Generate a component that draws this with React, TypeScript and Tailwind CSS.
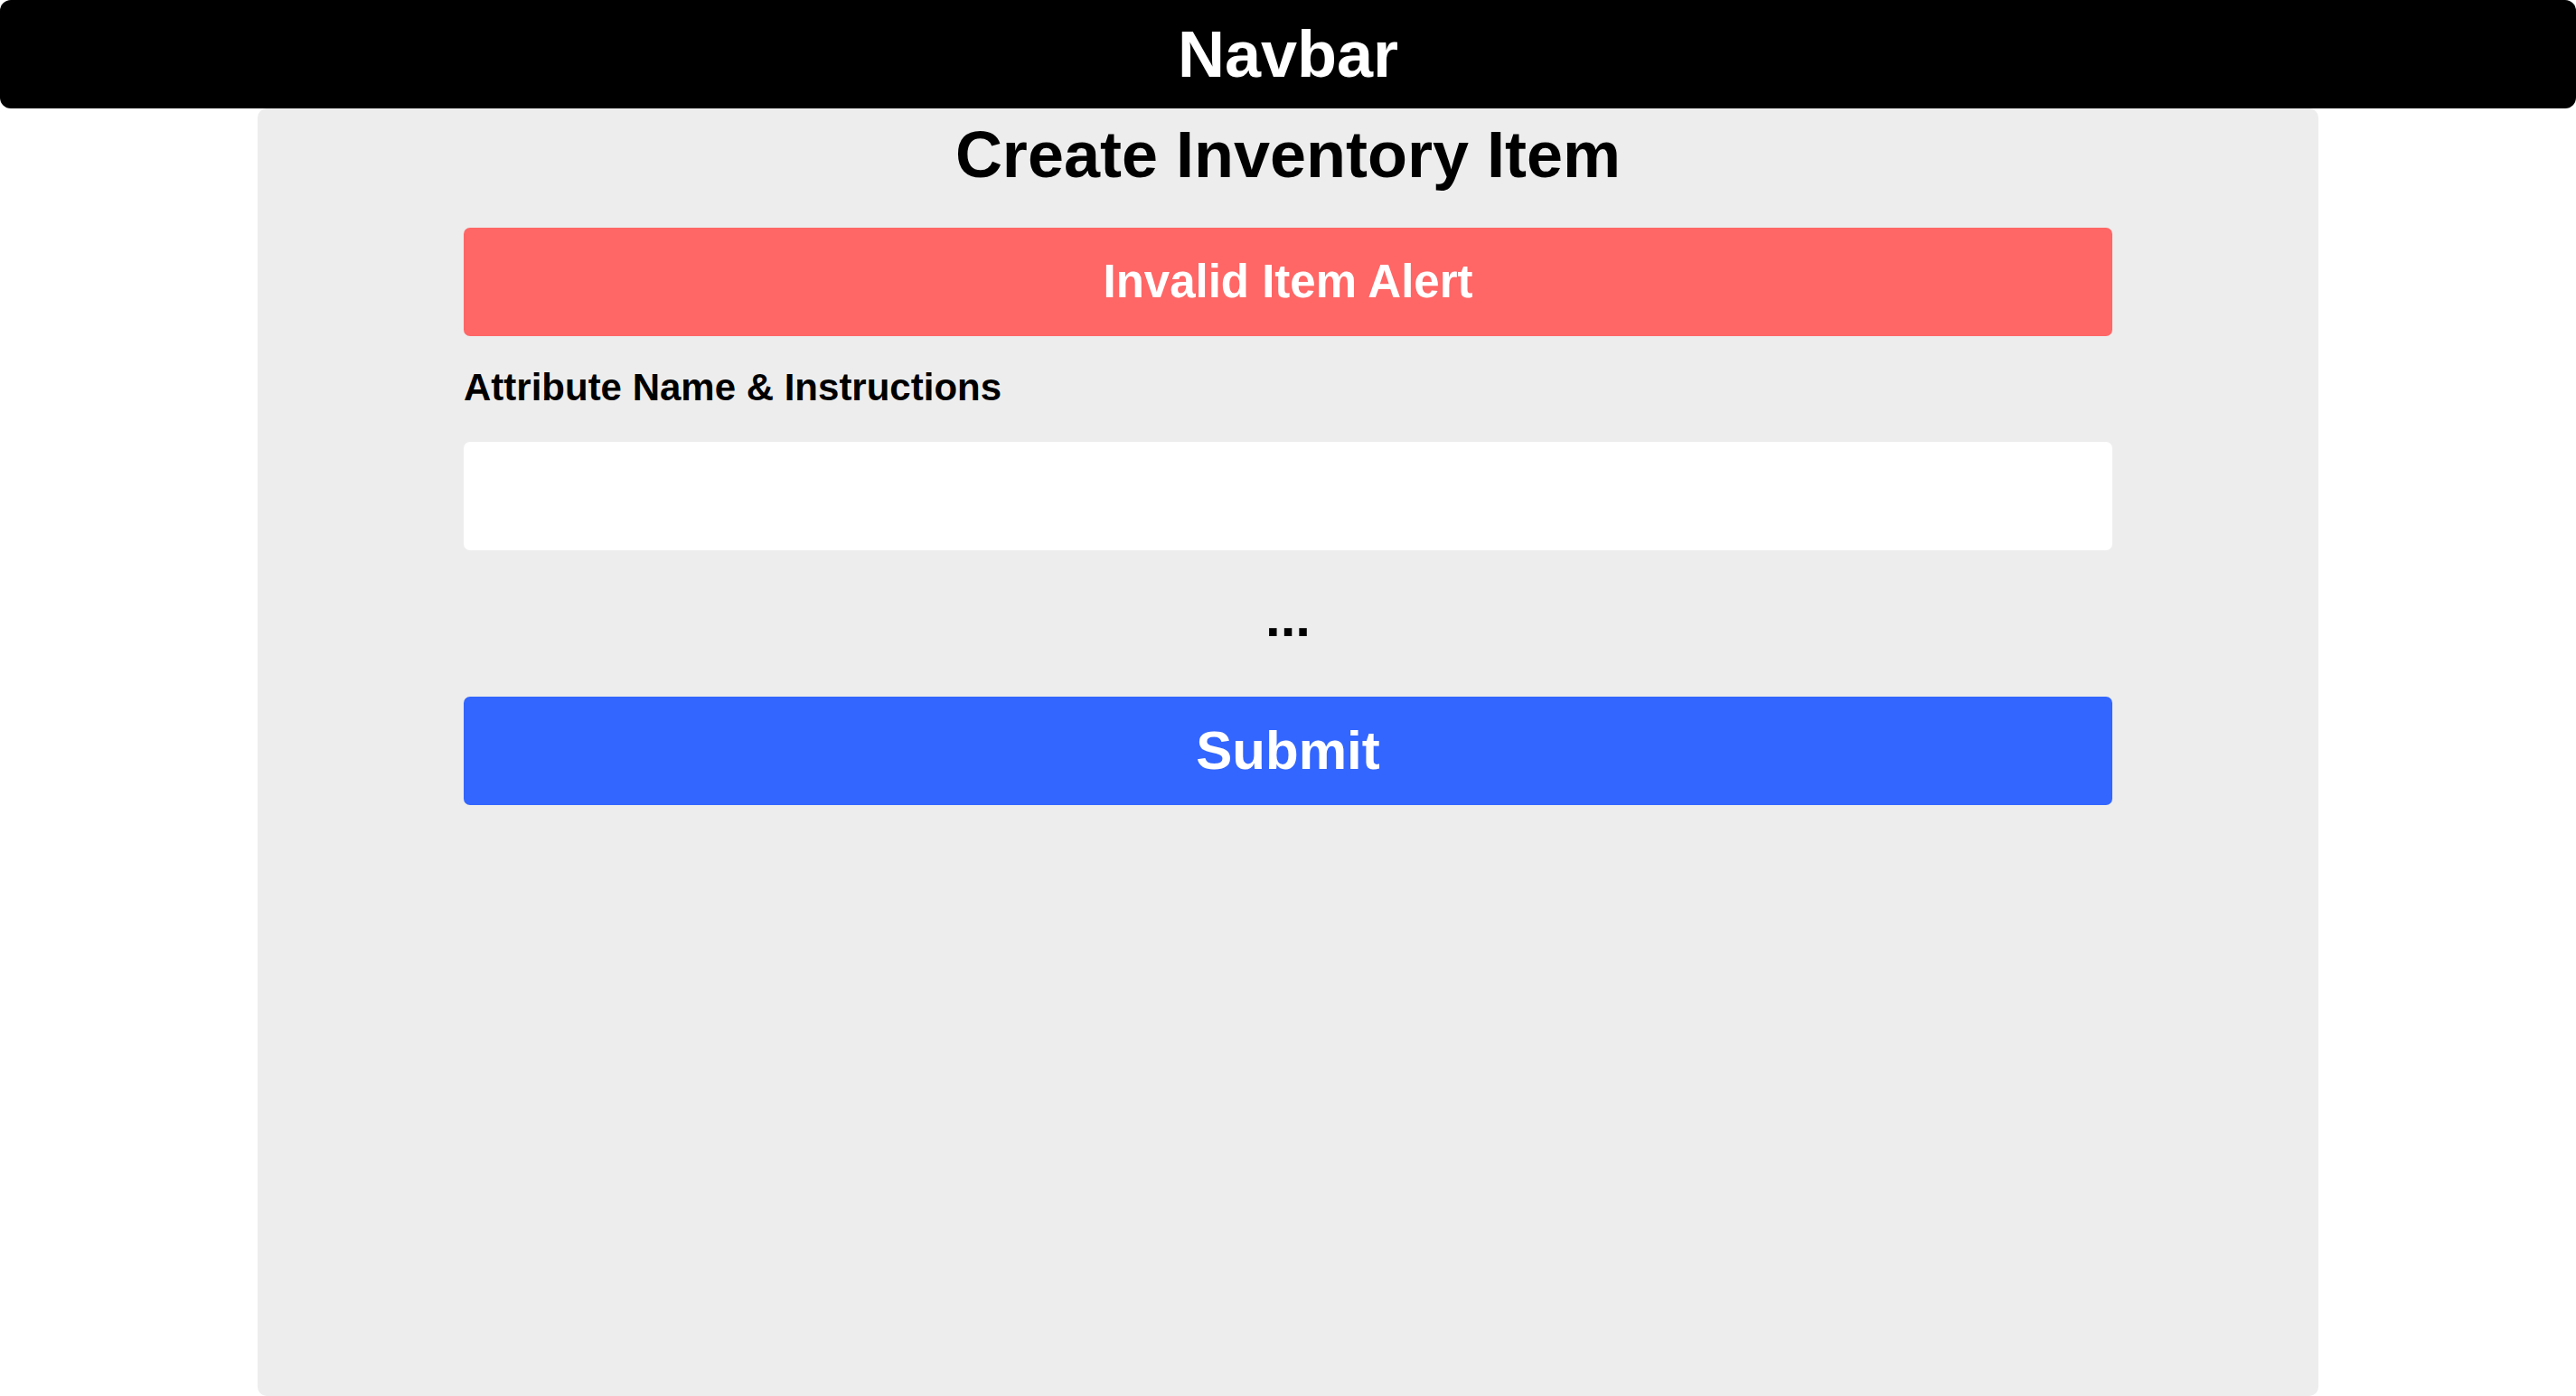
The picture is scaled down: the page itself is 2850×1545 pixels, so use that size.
import React from "react";

export default function App() {
  return (
    <div
      className="min-h-screen w-full bg-white flex flex-col"
      style={{ fontFamily: '"Liberation Sans", Arial, sans-serif' }}
    >
      <nav className="h-[120px] w-full bg-black rounded-[12px] flex items-center justify-center">
        <span className="text-white font-bold text-[72px] leading-[82px]">Navbar</span>
      </nav>
      <main className="mx-[285px] h-[1425px] bg-[#ededed] rounded-[10px] pt-[10px] flex flex-col items-center">
        <h1 className="text-black font-bold text-[72px] leading-[82px]">Create Inventory Item</h1>
        <div className="w-[1824px] mt-[40px] flex flex-col">
          <div className="h-[120px] bg-[#ff6666] rounded-[7px] flex items-center justify-center">
            <span className="text-white font-bold text-[51px] leading-[60px]">Invalid Item Alert</span>
          </div>
          <label className="mt-[33px] text-black font-bold text-[42px] leading-[48px]">
            Attribute Name &amp; Instructions
          </label>
          <input
            type="text"
            className="mt-[36px] h-[120px] bg-white rounded-[7px] outline-none border-0 px-6 text-[40px]"
          />
          <div className="mt-[40px] text-center text-black font-bold text-[60px] leading-[70px]">...</div>
          <button className="mt-[52px] h-[120px] bg-[#3366ff] rounded-[7px] flex items-center justify-center">
            <span className="text-white font-bold text-[60px] leading-[70px]">Submit</span>
          </button>
        </div>
      </main>
    </div>
  );
}
